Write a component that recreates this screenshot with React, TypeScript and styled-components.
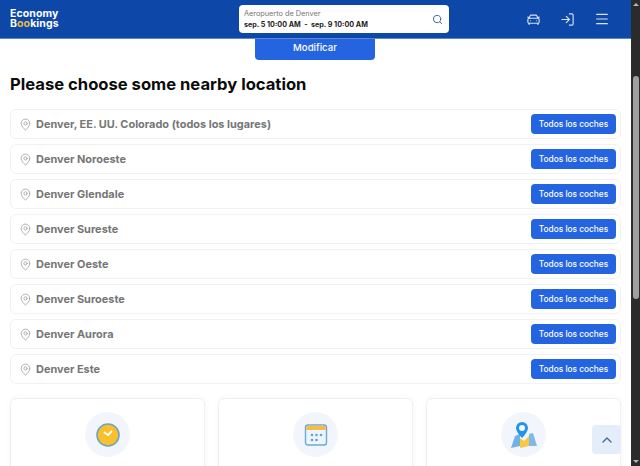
import React, { FC } from 'react'
import styled, { createGlobalStyle } from 'styled-components'
import { Search, CarFront, LogIn, Menu, MapPin, ChevronUp } from 'lucide-react'

const GlobalStyle = createGlobalStyle`
  html, body {
    margin: 0;
    padding: 0;
    height: 466px;
    overflow: hidden;
    background: #fff;
    font-family: Inter, "Liberation Sans", sans-serif;
  }
  * {
    box-sizing: border-box;
  }
`

const Screen = styled.div`
  display: flex;
  width: 640px;
  height: 466px;
  overflow: hidden;
`
const Page = styled.div`
  position: relative;
  flex: 1;
  min-width: 0;
  overflow: hidden;
`
const ScrollTrack = styled.div`
  display: flex;
  flex-direction: column;
  align-items: center;
  justify-content: space-between;
  width: 9px;
  background: #2b2b2b;
  padding: 3px 0;
`
const ScrollThumb = styled.div`
  width: 6px;
  height: 223px;
  margin-top: 70px;
  margin-bottom: auto;
  border-radius: 3px;
  background: #9f9f9f;
`
const ScrollArrow = styled.div<{ $down?: boolean }>`
  width: 0;
  height: 0;
  border-left: 3px solid transparent;
  border-right: 3px solid transparent;
  ${(p) => (p.$down ? 'border-top: 3px solid #b5b5b5;' : 'border-bottom: 3px solid #b5b5b5;')}
`
const Header = styled.header`
  display: grid;
  grid-template-columns: 229px 210px 1fr;
  align-items: center;
  height: 39px;
  padding-left: 10px;
  background: #0d47a8;
  border-bottom: 1px solid #5f86c8;
`
const Logo = styled.div`
  font-size: 10.5px;
  font-weight: 700;
  line-height: 10.5px;
  letter-spacing: 0.1px;
  color: #fff;
  span {
    color: #e9b949;
  }
`
const SearchBox = styled.div`
  display: flex;
  align-items: center;
  justify-content: space-between;
  height: 28px;
  padding: 1px 6px 0 5px;
  background: #fff;
  border-radius: 4px;
  color: #2e5fa8;
`
const SearchLabel = styled.div`
  font-size: 7.3px;
  line-height: 10px;
  color: #757575;
`
const SearchDates = styled.div`
  font-size: 7.2px;
  font-weight: 700;
  line-height: 10px;
  margin-top: 1px;
  color: #1c1c1c;
  white-space: pre;
`
const HeaderIcons = styled.div`
  display: flex;
  align-items: center;
  gap: 19px;
  padding-left: 77px;
  color: #d7e2f4;
`
const ModifyButton = styled.button`
  display: block;
  width: 120px;
  height: 21px;
  margin: 0 auto 0 255px;
  padding: 0 0 5px;
  border: 0;
  border-radius: 0 0 4px 4px;
  background: #2464e0;
  color: #fff;
  font-family: inherit;
  font-size: 9.6px;
  font-weight: 500;
`
const Content = styled.main`
  padding: 0 10px;
`
const Title = styled.h1`
  margin: 14px 0 15px;
  font-size: 16.6px;
  line-height: 20px;
  font-weight: 700;
  color: #0b0b0b;
`
const LocationList = styled.div`
  display: flex;
  flex-direction: column;
  gap: 5px;
`
const LocationRow = styled.div`
  display: flex;
  align-items: center;
  height: 30px;
  padding: 0 4px 0 8px;
  border: 1px solid #f2f2f2;
  border-radius: 6px;
  background: #fff;
  color: #9a9a9a;
`
const LocationName = styled.span`
  flex: 1;
  margin-left: 4px;
  font-size: 10.95px;
  font-weight: 700;
  color: #767676;
`
const CarsButton = styled.button`
  width: 85px;
  height: 20px;
  padding: 0;
  border: 0;
  border-radius: 4px;
  background: #2464e0;
  color: #fff;
  font-family: inherit;
  font-size: 8.3px;
  font-weight: 500;
`
const Features = styled.section`
  display: grid;
  grid-template-columns: repeat(3, 1fr);
  gap: 13px;
  margin-top: 14px;
`
const FeatureCard = styled.div`
  display: flex;
  justify-content: center;
  height: 100px;
  padding-top: 13px;
  border: 1px solid #f0f0f0;
  border-radius: 6px;
  background: #fff;
  box-shadow: 0 0 6px rgba(0, 0, 0, 0.04);
`
const IconCircle = styled.div`
  display: flex;
  align-items: center;
  justify-content: center;
  width: 45px;
  height: 45px;
  border-radius: 50%;
  background: #f2f6fc;
`
const BackToTop = styled.button`
  position: absolute;
  top: 425px;
  left: 592px;
  display: flex;
  align-items: center;
  justify-content: center;
  width: 29px;
  height: 29px;
  padding: 0;
  border: 0;
  border-radius: 4px;
  background: #e3eefa;
  color: #4a6a90;
`

const locations = [
  'Denver, EE. UU. Colorado (todos los lugares)',
  'Denver Noroeste',
  'Denver Glendale',
  'Denver Sureste',
  'Denver Oeste',
  'Denver Suroeste',
  'Denver Aurora',
  'Denver Este',
]

const ClockIcon: FC = () => (
  <svg width="24" height="24" viewBox="0 0 24 24">
    <circle cx="12" cy="12" r="11" fill="#f9c02e" stroke="#6ea6bd" strokeWidth="1.6" />
    <path d="M12 12 L8.5 9.5 M12 12 L15.5 8.5" stroke="#fff" strokeWidth="1.8" strokeLinecap="round" />
  </svg>
)

const CalendarIcon: FC = () => (
  <svg width="24" height="24" viewBox="0 0 24 24">
    <rect x="1.5" y="2" width="21" height="20" rx="2.5" fill="#edf5fc" stroke="#6aa9dc" strokeWidth="1.4" />
    <path d="M2.2 7V4.5a2 2 0 0 1 2-2h15.6a2 2 0 0 1 2 2V7z" fill="#f2bd4b" />
    <g fill="#6aa0cf">
      <circle cx="8" cy="12" r="1.3" />
      <circle cx="12.5" cy="12" r="1.3" />
      <circle cx="17" cy="12" r="1.3" />
      <circle cx="8" cy="17" r="1.3" />
      <circle cx="12.5" cy="17" r="1.3" />
    </g>
  </svg>
)

const MapIcon: FC = () => (
  <svg width="28" height="28" viewBox="0 0 28 28">
    <path d="M5 15 L10 13 L10 25 L1 27z" fill="#6fb1e8" />
    <path d="M10 17 L14 20 L19 15 L19 25 L10 27z" fill="#f9c83e" />
    <path d="M19 13 L23 12 L27 25 L19 25z" fill="#7db9ea" />
    <path d="M11 1a6 6 0 0 1 6 6c0 4-6 10-6 10S5 11 5 7a6 6 0 0 1 6-6z" fill="#2196e8" transform="translate(1 0)" />
    <circle cx="12" cy="7" r="3" fill="#f2f6fc" />
  </svg>
)

const App: FC = () => {
  return (
    <Screen>
      <GlobalStyle />
      <Page>
        <Header>
          <Logo>
            Economy
            <br />
            B<span>oo</span>kings
          </Logo>
          <SearchBox>
            <div>
              <SearchLabel>Aeropuerto de Denver</SearchLabel>
              <SearchDates>sep. 5 10:00 AM  -  sep. 9 10:00 AM</SearchDates>
            </div>
            <Search size={11} strokeWidth={2} />
          </SearchBox>
          <HeaderIcons>
            <CarFront size={15} strokeWidth={1.8} />
            <LogIn size={15} strokeWidth={1.8} />
            <Menu size={16} strokeWidth={1.8} />
          </HeaderIcons>
        </Header>
        <ModifyButton>Modificar</ModifyButton>
        <Content>
          <Title>Please choose some nearby location</Title>
          <LocationList>
            {locations.map((name) => (
              <LocationRow key={name}>
                <MapPin size={13} strokeWidth={1.4} />
                <LocationName>{name}</LocationName>
                <CarsButton>Todos los coches</CarsButton>
              </LocationRow>
            ))}
          </LocationList>
          <Features>
            <FeatureCard>
              <IconCircle>
                <ClockIcon />
              </IconCircle>
            </FeatureCard>
            <FeatureCard>
              <IconCircle>
                <CalendarIcon />
              </IconCircle>
            </FeatureCard>
            <FeatureCard>
              <IconCircle>
                <MapIcon />
              </IconCircle>
            </FeatureCard>
          </Features>
        </Content>
        <BackToTop>
          <ChevronUp size={16} strokeWidth={2} />
        </BackToTop>
      </Page>
      <ScrollTrack>
        <ScrollArrow />
        <ScrollThumb />
        <ScrollArrow $down />
      </ScrollTrack>
    </Screen>
  )
}

export default App
